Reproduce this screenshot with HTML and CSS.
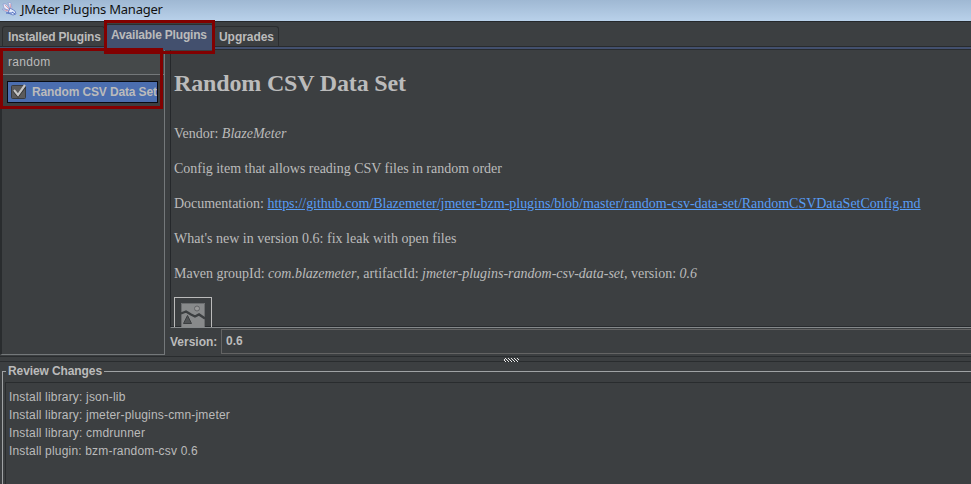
FILE: index.html
```html
<!DOCTYPE html>
<html lang="en">
<head>
<meta charset="utf-8">
<title>JMeter Plugins Manager</title>
<link rel="stylesheet" href="styles.css">
</head>
<body>
<header class="titlebar">
  <svg class="logo" width="15" height="14" viewBox="0 0 15 14">
    <path d="M1 2l3 0 4 5-1 2-5-3zM6 0l3 1 1 6-2 1zM0 7l7 1 4 3-6-1-4-2z" fill="#eceefa" stroke="#8c96cd" stroke-width=".7"/>
    <path d="M3 3l5 5M8 2l1 6M3 8l6 2" stroke="#d78c99" stroke-width=".8" fill="none"/>
    <path d="M8 6l5 3 1 3-3 1-5-2z" fill="#e3eafa" stroke="#5975bf" stroke-width=".8"/>
    <path d="M4 11h6M10 10l3 2" stroke="#4265bd"/>
  </svg>
  <span class="title">JMeter Plugins Manager</span>
</header>
<nav class="tabs">
  <span class="tab installed">Installed Plugins</span>
  <span class="tab available">Available Plugins<i class="mark mark-tab"></i></span>
  <span class="tab upgrades">Upgrades</span>
</nav>
<main class="workspace">
  <aside class="sidebar">
    <div class="search">random</div>
    <div class="item">
      <svg class="check" width="16" height="16" viewBox="0 0 16 16">
        <rect x=".5" y="1.500" width="14" height="13" rx="1" fill="#5b5b5c" stroke="#393b3e"/>
        <path d="M3 6.500l4 5L14 2" fill="none" stroke="#303030" stroke-width="3"/>
        <path d="M3 6l4 5L14 1" fill="none" stroke="#c5c5c5" stroke-width="2.200"/>
      </svg>
      <span class="item-name">Random CSV Data Set</span>
    </div>
    <i class="mark mark-list"></i>
  </aside>
  <section class="details">
    <article class="description">
      <h1>Random CSV Data Set</h1>
      <p>Vendor: <em>BlazeMeter</em></p>
      <p class="tight">Config item that allows reading CSV files in random order</p>
      <p class="tight">Documentation: <a>https://github.com/Blazemeter/jmeter-bzm-plugins/blob/master/random-csv-data-set/RandomCSVDataSetConfig.md</a></p>
      <p class="loose">What's new in version 0.6: fix leak with open files</p>
      <p>Maven groupId: <em>com.blazemeter</em>, artifactId: <em>jmeter-plugins-random-csv-data-set</em>, version: <em>0.6</em></p>
      <svg class="picture" width="38" height="38" viewBox="0 0 38 38">
        <rect x=".5" y=".5" width="37" height="37" fill="none" stroke="#bbb"/>
        <rect x="7" y="6" width="24" height="26" fill="#888a8b"/>
        <path d="M7.500 31V6.500H30.500V31" fill="none" stroke="#6b6d6f"/>
        <circle cx="23" cy="11.500" r="2.500" fill="#999" stroke="#626466"/>
        <path d="M7 16.500l5-2 5 3 4 2 4-2 6 4" fill="none" stroke="#3c3f41" stroke-width="2.400"/>
        <path d="M13.500 18.500l4 8h-8z" fill="#505355" stroke="#3c3f41"/>
      </svg>
    </article>
    <div class="version"><label>Version:</label><div class="combo">0.6</div></div>
  </section>
</main>
<div class="divider">
  <svg width="16" height="4" viewBox="0 0 16 4" shape-rendering="crispEdges">
    <path d="M1 0h1v1h-1zM4 0h1v1h-1zM7 0h1v1h-1zM10 0h1v1h-1zM13 0h1v1h-1zM0 1h1v1h-1zM2 1h1v1h-1zM5 1h1v1h-1zM8 1h1v1h-1zM11 1h1v1h-1zM14 1h1v1h-1zM0 2h1v1h-1zM3 2h1v1h-1zM6 2h1v1h-1zM9 2h1v1h-1zM12 2h1v1h-1zM1 3h1v1h-1zM4 3h1v1h-1zM7 3h1v1h-1zM10 3h1v1h-1zM13 3h1v1h-1z" fill="#e8e8e8"/>
  </svg>
</div>
<section class="review">
  <h2>Review Changes</h2>
  <div class="changes">
    <div>Install library: json-lib</div>
    <div>Install library: jmeter-plugins-cmn-jmeter</div>
    <div>Install library: cmdrunner</div>
    <div>Install plugin: bzm-random-csv 0.6</div>
  </div>
</section>
</body>
</html>
```
FILE: styles.css
```css
* { box-sizing: border-box; }
body {
  margin: 0;
  width: 971px;
  height: 484px;
  overflow: hidden;
  display: flex;
  flex-direction: column;
  background: #3c3f41;
  color: #bbb;
  font: 12px/18px "Liberation Sans", sans-serif;
  white-space: nowrap;
}
.titlebar {
  height: 22px;
  flex: none;
  display: flex;
  background: linear-gradient(#9fb8d3, #b9d1ea);
  border-bottom: 1px solid #25282b;
  color: #111;
  font: 13px/18px "Noto Sans", sans-serif;
  letter-spacing: -.23px;
}
.logo { margin: 2px 4px 0 2px; }
.tabs {
  height: 28px;
  flex: none;
  display: flex;
  padding-left: 2px;
  background: linear-gradient(#3c3f41 24px, #282b2e 24px 25px, #43506e 25px 27px, #282b2e 27px);
  font-weight: bold;
  line-height: 20px;
}
.tab { height: 21px; margin-top: 4px; border: 1px solid #2b2d2f; border-bottom: 0; border-radius: 3px 3px 0 0; }
.installed { width: 103px; padding-left: 5px; letter-spacing: -.15px; }
.available { position: relative; width: 109px; height: 26px; margin-top: 2px; padding-left: 5px; background: #43506e; letter-spacing: -.18px; }
.upgrades { width: 65px; padding-left: 4px; letter-spacing: -.05px; }
.mark { position: absolute; border: 3px solid #820000; z-index: 2; }
.mark-tab { left: -2px; top: -5px; width: 111px; height: 34px; }
.mark-list { left: -2px; top: -2px; width: 163px; height: 61px; }
.workspace { height: 307px; flex: none; display: flex; }
.sidebar {
  position: relative;
  width: 165px;
  height: 305px;
  border: 1px solid #74787a;
  border-left: 2px solid #292c2e;
  border-top: 0;
}
.search { height: 25px; padding-left: 6px; line-height: 24px; background: #45494a; border-bottom: 1px solid #74787a; letter-spacing: .3px; }
.item {
  display: flex;
  width: 151px;
  height: 22px;
  margin: 6px 0 0 5px;
  overflow: hidden;
  border: 1px solid #080b12;
  background: #4b6eaf;
  font-weight: bold;
  line-height: 20px;
  letter-spacing: -.13px;
}
.check { margin: 2px 5px 0 3px; flex: none; }
.details { flex: 1; margin-left: 5px; }
.description {
  height: 278px;
  overflow: hidden;
  padding: 19px 0 0 3px;
  border-left: 1px solid #25282b;
  border-bottom: 1px solid #85898b;
  box-shadow: inset 0 -1px #282b2e;
  font: 14px/17px "Liberation Serif", serif;
}
h1 { margin: 0 0 28px; font-size: 24px; line-height: 28px; letter-spacing: -.16px; }
p { height: 17px; margin: 0 0 18px; }
.tight { letter-spacing: -.02px; }
.loose { letter-spacing: .015px; }
a { color: #589df6; text-decoration: underline; }
.picture { display: block; margin-top: -3px; }
.version { display: flex; height: 27px; font-weight: bold; line-height: 24px; }
.version label { width: 51px; padding-top: 2px; }
.combo { flex: 1; height: 25px; margin-top: 1px; padding-left: 4px; line-height: 23px; border: 1px solid #646464; border-right: 0; }
.divider { height: 6px; flex: none; padding: 1px 0 0 504px; border: solid #292c2e; border-width: 1px 0; margin-top: -1px; }
.divider svg { display: block; }
.review { position: relative; flex: 1; margin: 9px 0 0 2px; padding: 10px 0 0 3px; border: solid #a0a3a5; border-width: 1px 0 0 1px; }
h2 { position: absolute; left: 3px; top: -10px; width: 98px; margin: 0; padding-left: 2px; background: #3c3f41; font-size: 12px; line-height: 18px; letter-spacing: -.1px; }
.changes { height: 110px; padding: 5px 0 0 3px; border: 1px solid #292c2e; border-width: 1px 0 0 1px; margin-left: -1px; letter-spacing: .18px; }
```
